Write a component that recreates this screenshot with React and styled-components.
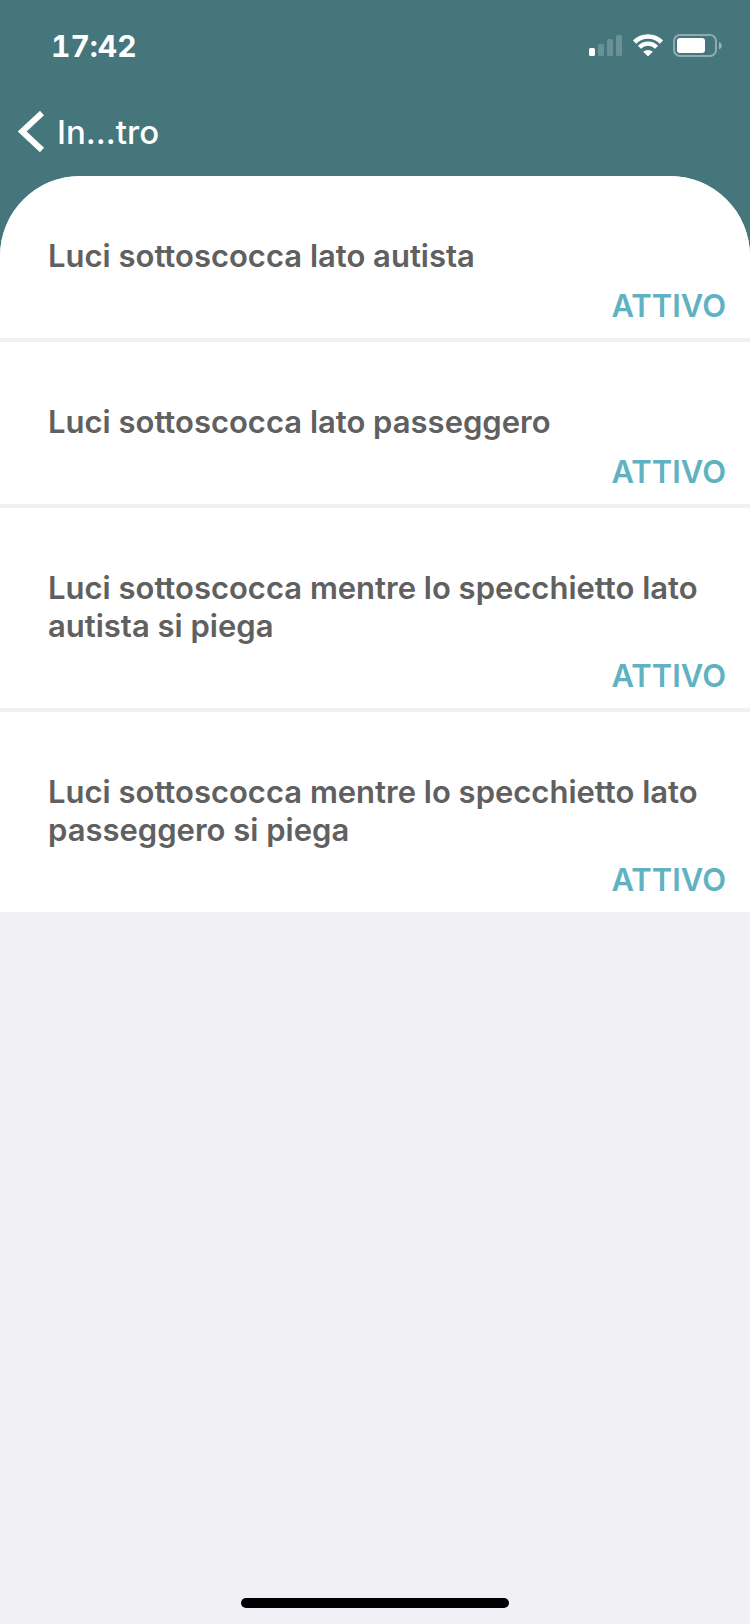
import React from 'react'
import styled, { createGlobalStyle } from 'styled-components';

const GlobalStyle = createGlobalStyle`
  *,
  *::before,
  *::after {
    box-sizing: border-box;
  }

  body {
    margin: 0;
    background-color: #f0f0f5;
    font-family: Inter, "Liberation Sans", sans-serif;
    font-variant-ligatures: none;
  }
`;

const Screen = styled.div`
  display: flex;
  flex-direction: column;
  min-height: 100vh;
`;

/* The header runs on behind the rounded top of the list */
const Header = styled.header`
  padding-bottom: 84px;
  background-color: #44767c;
  color: #fff;
`;

const StatusBar = styled.div`
  display: flex;
  align-items: center;
  justify-content: space-between;
  height: 92px;
  padding: 0 27px 0 51px;
`;

const Clock = styled.time`
  font-size: 30px;
  font-weight: 700;
  font-variant-numeric: tabular-nums;
  line-height: 38px;
`;

const StatusIcons = styled.div`
  display: flex;
  align-items: center;
  gap: 10px;

  & svg {
    display: block;
  }
`;

const NavBar = styled.nav`
  display: flex;
  align-items: center;
  height: 80px;
  padding: 0 18px;
`;

const BackButton = styled.button`
  display: flex;
  align-items: center;
  gap: 12px;
  padding: 0;
  border: 0;
  background: none;
  color: inherit;
  font-family: inherit;
  font-size: 33px;
  font-weight: 500;
  line-height: 38px;
  cursor: pointer;
`;

const List = styled.ul`
  display: flex;
  flex-direction: column;
  gap: 4px;
  margin: -80px 0 0;
  padding: 0;
  list-style: none;
  border-radius: 80px 80px 0 0;
  background-color: #f0f0f5;
  overflow: hidden;
`;

const Row = styled.li`
  display: flex;
  flex-direction: column;
  gap: 12px;
  padding: 61px 24px 13px 48px;
  background-color: #fff;
  font-size: 31px;
  font-weight: 600;
  line-height: 38px;
`;

const Name = styled.span`
  color: #606060;
`;

const State = styled.span`
  align-self: flex-end;
  color: #60b2c3;
`;

const HomeBar = styled.div`
  width: 268px;
  height: 10px;
  margin: auto auto 16px;
  border-radius: 5px;
  background-color: #000;
`;

const SignalIcon = () => (
  <svg width="34" height="24" viewBox="0 0 34 24" fill="#fff" aria-hidden="true">
    <rect x="0" y="14" width="6" height="8" rx="1.5" />
    <g opacity="0.2">
      <rect x="9" y="10" width="6" height="12" rx="1.5" />
      <rect x="18" y="5" width="6" height="17" rx="1.5" />
      <rect x="27" y="1" width="6" height="21" rx="1.5" />
    </g>
  </svg>
)

const WifiIcon = () => (
  <svg width="30" height="24" viewBox="0 0 30 24" fill="none" aria-hidden="true">
    <path d="M1.6 8 A19 19 0 0 1 28.4 8" stroke="#fff" strokeWidth="4.6" />
    <path d="M6.4 13.3 A12 12 0 0 1 23.6 13.3" stroke="#fff" strokeWidth="4.4" />
    <path d="M15 22.6 L10.2 17.8 A7 7 0 0 1 19.8 17.8 Z" fill="#fff" />
  </svg>
)

const BatteryIcon = () => (
  <svg width="50" height="24" viewBox="0 0 50 24" fill="none" aria-hidden="true">
    <rect x="1" y="1" width="42" height="21" rx="6" stroke="#fff" strokeWidth="2" opacity="0.4" />
    <path d="M46 8 C49.6 9 49.6 14.4 46 15.4 Z" fill="#fff" opacity="0.45" />
    <rect x="4" y="4" width="28" height="15" rx="3" fill="#fff" />
  </svg>
)

const ChevronIcon = () => (
  <svg width="27" height="42" viewBox="0 0 27 42" fill="none" aria-hidden="true">
    <path d="M24 2 L4.2 20.5 L24 39" stroke="#fff" strokeWidth="6" />
  </svg>
)

const lights = [
  'Luci sottoscocca lato autista',
  'Luci sottoscocca lato passeggero',
  'Luci sottoscocca mentre lo specchietto lato autista si piega',
  'Luci sottoscocca mentre lo specchietto lato passeggero si piega',
]

const App = () => {
    return (
        <>
            <GlobalStyle />
            <Screen>
                <Header>
                    <StatusBar>
                        <Clock>17:42</Clock>
                        <StatusIcons>
                            <SignalIcon />
                            <WifiIcon />
                            <BatteryIcon />
                        </StatusIcons>
                    </StatusBar>
                    <NavBar>
                        <BackButton type="button">
                            <ChevronIcon />
                            <span>In...tro</span>
                        </BackButton>
                    </NavBar>
                </Header>
                <List>
                    {lights.map((name) => (
                        <Row key={name}>
                            <Name>{name}</Name>
                            <State>ATTIVO</State>
                        </Row>
                    ))}
                </List>
                <HomeBar />
            </Screen>
        </>
  )
}

export default App
